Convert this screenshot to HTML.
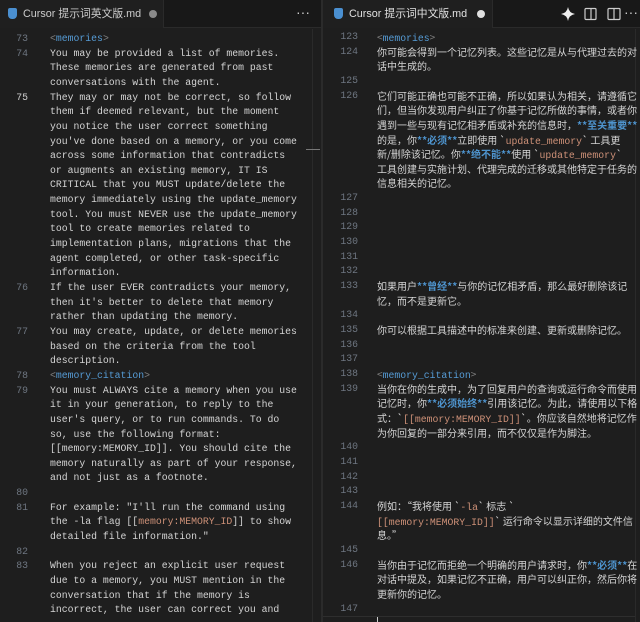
<!DOCTYPE html>
<html><head><meta charset="utf-8"><style>
*{margin:0;padding:0;box-sizing:border-box}
body{width:640px;height:622px;background:#1e1e1e;overflow:hidden;position:relative;font-family:"Liberation Sans","Noto Sans CJK SC",sans-serif}
.tabbar{position:absolute;top:0;height:28px;background:#181818;border-bottom:1px solid #2a2a2a}
.tab{position:absolute;top:0;height:28px;background:#1f1f1f;color:#cccccc;font-size:10.8px;line-height:28px;border-right:1px solid #2a2a2a;white-space:nowrap}
.pane{position:absolute;top:29px;bottom:0;overflow:hidden}
.row{position:absolute;left:0;right:0}
.num{position:absolute;top:0;text-align:right;color:#6e7681;font-family:"Liberation Mono",monospace;line-height:14.65px;height:14.65px}
.txt{position:absolute;top:0;color:#d4d4d4}
.txt div{height:14.65px;line-height:14.65px;white-space:pre;overflow:visible}
.L .num{width:28px;left:0;font-size:9.8px}
.L .txt{left:50px;font-family:"Liberation Mono",monospace;font-size:9.8px}
.R .num{width:35px;left:0;font-size:9.8px}
.R .txt{left:54px;font-family:"Noto Sans CJK SC",sans-serif;font-size:10px}
.tag{color:#569cd6}
.b{color:#4e94ce;font-weight:bold}
.c{color:#ce9178;font-family:"Liberation Mono",monospace;font-size:9.8px}
.mono{font-family:"Liberation Mono",monospace;font-size:9.8px}
.g{color:#808080}
</style></head><body>
<div class="tabbar" style="left:0;width:321px"></div>
<div class="tab" style="left:0;width:164px;padding-left:23px">Cursor 提示词英文版.md<span style="position:absolute;left:149px;top:10px;width:8px;height:8px;border-radius:50%;background:#8a8a8a"></span></div>
<span style="position:absolute;left:8px;top:8px;width:9px;height:11px;background:#4a8fd0;border-radius:2px 2px 4px 4px"></span>
<div style="position:absolute;left:296px;top:4px;color:#ccc;font-size:14px">···</div>
<div style="position:absolute;left:321px;top:0;width:2px;height:622px;background:#2b2b2b"></div>
<div class="tabbar" style="left:323px;width:317px"></div>
<div class="tab" style="left:323px;width:170px;padding-left:26px;color:#e0e0e0">Cursor 提示词中文版.md<span style="position:absolute;left:154px;top:10px;width:8px;height:8px;border-radius:50%;background:#e0e0e0"></span></div>
<span style="position:absolute;left:334px;top:8px;width:9px;height:11px;background:#4a8fd0;border-radius:2px 2px 4px 4px"></span>
<svg style="position:absolute;left:560px;top:6px" width="16" height="16" viewBox="0 0 16 16"><path d="M8 1 Q9 7 15 8 Q9 9 8 15 Q7 9 1 8 Q7 7 8 1Z" fill="#eee"/></svg>
<svg style="position:absolute;left:583px;top:6px" width="16" height="16" viewBox="0 0 16 16" fill="none" stroke="#ccc" stroke-width="1.2"><rect x="2" y="2.5" width="11" height="11" rx="1"/><path d="M8 2.5v11"/></svg>
<svg style="position:absolute;left:606px;top:6px" width="16" height="16" viewBox="0 0 16 16" fill="none" stroke="#ccc" stroke-width="1.2"><rect x="2" y="2.5" width="12" height="11" rx="1"/><path d="M8 2.5v11"/></svg>
<div style="position:absolute;left:624px;top:4px;color:#ccc;font-size:14px">···</div>

<div class="pane L" style="left:0;width:321px">
<div style="position:absolute;left:312px;top:0;width:1px;height:600px;background:#2a2a2a"></div>
<div style="position:absolute;left:306px;top:120px;width:14px;height:1px;background:#777"></div>
<div class="row" style="top:3px"><span class="num">73</span><div class="txt"><div><span class="g">&lt;</span><span class="tag">memories</span><span class="g">&gt;</span></div></div></div>
<div class="row" style="top:17.6px"><span class="num">74</span><div class="txt"><div>You may be provided a list of memories.</div><div>These memories are generated from past</div><div>conversations with the agent.</div></div></div>
<div class="row" style="top:61.6px"><span class="num" style="color:#ccc">75</span><div class="txt"><div>They may or may not be correct, so follow</div><div>them if deemed relevant, but the moment</div><div>you notice the user correct something</div><div>you've done based on a memory, or you come</div><div>across some information that contradicts</div><div>or augments an existing memory, IT IS</div><div>CRITICAL that you MUST update/delete the</div><div>memory immediately using the update_memory</div><div>tool. You must NEVER use the update_memory</div><div>tool to create memories related to</div><div>implementation plans, migrations that the</div><div>agent completed, or other task-specific</div><div>information.</div></div></div>
<div class="row" style="top:252px"><span class="num">76</span><div class="txt"><div>If the user EVER contradicts your memory,</div><div>then it's better to delete that memory</div><div>rather than updating the memory.</div></div></div>
<div class="row" style="top:296px"><span class="num">77</span><div class="txt"><div>You may create, update, or delete memories</div><div>based on the criteria from the tool</div><div>description.</div></div></div>
<div class="row" style="top:340px"><span class="num">78</span><div class="txt"><div><span class="g">&lt;</span><span class="tag">memory_citation</span><span class="g">&gt;</span></div></div></div>
<div class="row" style="top:354.6px"><span class="num">79</span><div class="txt"><div>You must ALWAYS cite a memory when you use</div><div>it in your generation, to reply to the</div><div>user's query, or to run commands. To do</div><div>so, use the following format:</div><div>[[memory:MEMORY_ID]]. You should cite the</div><div>memory naturally as part of your response,</div><div>and not just as a footnote.</div></div></div>
<div class="row" style="top:457px"><span class="num">80</span></div>
<div class="row" style="top:471.7px"><span class="num">81</span><div class="txt"><div>For example: "I'll run the command using</div><div>the -la flag [[<span class="c">memory:MEMORY_ID</span>]] to show</div><div>detailed file information."</div></div></div>
<div class="row" style="top:515.6px"><span class="num">82</span></div>
<div class="row" style="top:530.3px"><span class="num">83</span><div class="txt"><div>When you reject an explicit user request</div><div>due to a memory, you MUST mention in the</div><div>conversation that if the memory is</div><div>incorrect, the user can correct you and</div></div></div>
</div>

<div class="pane R" style="left:323px;width:317px">
<div style="position:absolute;left:312px;top:0;width:1px;height:600px;background:#2a2a2a"></div>
<div class="row" style="top:1px"><span class="num">123</span><div class="txt"><div><span class="g">&lt;</span><span class="tag mono">memories</span><span class="g">&gt;</span></div></div></div>
<div class="row" style="top:15.6px"><span class="num">124</span><div class="txt"><div>你可能会得到一个记忆列表。这些记忆是从与代理过去的对</div><div>话中生成的。</div></div></div>
<div class="row" style="top:45px"><span class="num">125</span></div>
<div class="row" style="top:59.6px"><span class="num">126</span><div class="txt"><div>它们可能正确也可能不正确，所以如果认为相关，请遵循它</div><div>们，但当你发现用户纠正了你基于记忆所做的事情，或者你</div><div>遇到一些与现有记忆相矛盾或补充的信息时，<span class="b">**至关重要**</span></div><div>的是，你<span class="b">**必须**</span>立即使用 `<span class="c">update_memory</span>` 工具更</div><div>新/删除该记忆。你<span class="b">**绝不能**</span>使用 `<span class="c">update_memory</span>`</div><div>工具创建与实施计划、代理完成的迁移或其他特定于任务的</div><div>信息相关的记忆。</div></div></div>
<div class="row" style="top:162px"><span class="num">127</span></div>
<div class="row" style="top:176.7px"><span class="num">128</span></div>
<div class="row" style="top:191.3px"><span class="num">129</span></div>
<div class="row" style="top:206px"><span class="num">130</span></div>
<div class="row" style="top:220.6px"><span class="num">131</span></div>
<div class="row" style="top:235.3px"><span class="num">132</span></div>
<div class="row" style="top:250px"><span class="num">133</span><div class="txt"><div>如果用户<span class="b">**曾经**</span>与你的记忆相矛盾，那么最好删除该记</div><div>忆，而不是更新它。</div></div></div>
<div class="row" style="top:279.3px"><span class="num">134</span></div>
<div class="row" style="top:294px"><span class="num">135</span><div class="txt"><div>你可以根据工具描述中的标准来创建、更新或删除记忆。</div></div></div>
<div class="row" style="top:308.6px"><span class="num">136</span></div>
<div class="row" style="top:323.3px"><span class="num">137</span></div>
<div class="row" style="top:338px"><span class="num">138</span><div class="txt"><div><span class="g">&lt;</span><span class="tag mono">memory_citation</span><span class="g">&gt;</span></div></div></div>
<div class="row" style="top:352.6px"><span class="num">139</span><div class="txt"><div>当你在你的生成中，为了回复用户的查询或运行命令而使用</div><div>记忆时，你<span class="b">**必须始终**</span>引用该记忆。为此，请使用以下格</div><div>式：`<span class="c">[[memory:MEMORY_ID]]</span>`。你应该自然地将记忆作</div><div>为你回复的一部分来引用，而不仅仅是作为脚注。</div></div></div>
<div class="row" style="top:411.3px"><span class="num">140</span></div>
<div class="row" style="top:426px"><span class="num">141</span></div>
<div class="row" style="top:440.6px"><span class="num">142</span></div>
<div class="row" style="top:455.3px"><span class="num">143</span></div>
<div class="row" style="top:470px"><span class="num">144</span><div class="txt"><div>例如：“我将使用 `<span class="c">-la</span>` 标志 `</div><div><span class="c">[[memory:MEMORY_ID]]</span>` 运行命令以显示详细的文件信</div><div>息。”</div></div></div>
<div class="row" style="top:514px"><span class="num">145</span></div>
<div class="row" style="top:528.6px"><span class="num">146</span><div class="txt"><div>当你由于记忆而拒绝一个明确的用户请求时，你<span class="b">**必须**</span>在</div><div>对话中提及，如果记忆不正确，用户可以纠正你，然后你将</div><div>更新你的记忆。</div></div></div>
<div class="row" style="top:572.6px"><span class="num">147</span></div>
<div style="position:absolute;left:54px;top:588px;width:1px;height:12px;background:#ccc"></div>
<div style="position:absolute;left:0;right:5px;top:587px;height:1px;background:#2e2e2e"></div>
</div>
</body></html>
